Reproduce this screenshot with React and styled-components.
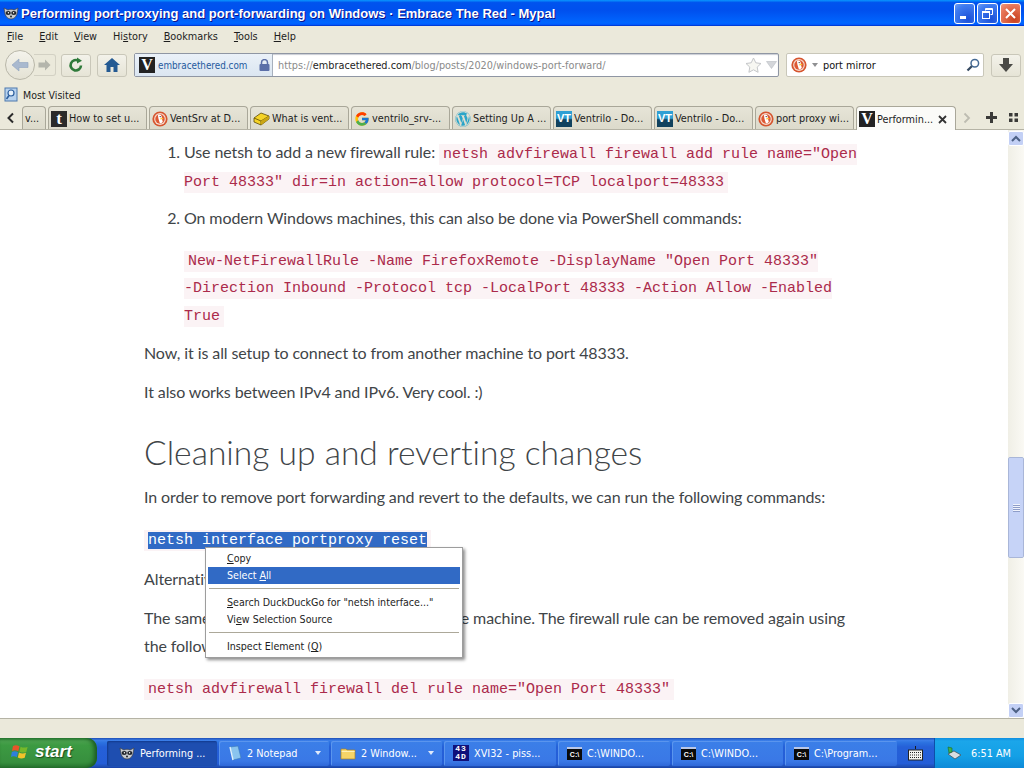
import React from 'react';
import styled, { createGlobalStyle, css } from 'styled-components';
import { FcGoogle } from 'react-icons/fc';
import { FaWordpress } from 'react-icons/fa';

const ui = `"DejaVu Sans Condensed", "DejaVu Sans", "Liberation Sans", sans-serif`;

const GlobalStyle = createGlobalStyle`
	html, body {
		margin: 0;
		padding: 0;
		background: #ffffff;
	}
`;

const Screen = styled.div`
	width: 1024px;
	height: 768px;
	display: flex;
	flex-direction: column;
	overflow: hidden;
	background: #ece9d8;
	font-family: ${ui};
	font-size: 10.8px;
	color: #1d1d1d;
`;

// Window chrome
const TitleBar = styled.div`
	height: 26px;
	flex: none;
	display: flex;
	align-items: center;
	padding: 0 3px 0 3px;
	gap: 2px;
	background: linear-gradient(180deg, #0997ff 0, #0053ee 10%, #0050ee 40%, #0066ff 88%, #005bff 94%, #003dd7 97%, #003dd7 100%);
`;

const TitleText = styled.div`
	flex: 1;
	color: #ffffff;
	font-family: "Liberation Sans", sans-serif;
	font-weight: 700;
	font-size: 13px;
	text-shadow: 1px 1px 0 #0f1089;
	white-space: nowrap;
`;

const WinButtons = styled.div`
	display: flex;
	gap: 2px;
`;

const WinButton = styled.div`
	width: 21px;
	height: 21px;
	box-sizing: border-box;
	border: 1px solid #ffffff;
	border-radius: 3px;
	display: flex;
	align-items: center;
	justify-content: center;
	background: ${p => (p.$close ? 'radial-gradient(circle at 70% 80%, #c9401e, #e8785a 70%, #ee9a80)' : 'radial-gradient(circle at 70% 80%, #1c50d8, #3f7cf0 70%, #6d9cf5)')};
`;

const MenuBar = styled.div`
	height: 20px;
	flex: none;
	display: flex;
	align-items: center;
	gap: 16px;
	padding: 0 7px;
	background: #ebe9db;
`;

const Underlined = styled.span`
	text-decoration: underline;
	text-underline-offset: 1px;
`;

const NavBar = styled.div`
	height: 38px;
	flex: none;
	display: flex;
	align-items: center;
	padding: 0 3px 0 5px;
	background: #ebe9db;
`;

const BackButton = styled.div`
	width: 30px;
	height: 30px;
	box-sizing: border-box;
	border-radius: 50%;
	border: 1px solid #b9b7a9;
	background: linear-gradient(#f4f3ec, #e4e2d4);
	display: flex;
	align-items: center;
	justify-content: center;
	position: relative;
	z-index: 1;
`;

const ForwardButton = styled.div`
	width: 22px;
	height: 22px;
	box-sizing: border-box;
	margin-left: -1px;
	border: 1px solid #d3d1c4;
	border-left: none;
	border-radius: 0 3px 3px 0;
	background: #ebe9db;
	display: flex;
	align-items: center;
	justify-content: center;
`;

const ToolButton = styled.div`
	width: 30px;
	height: 23px;
	flex: none;
	box-sizing: border-box;
	margin-left: ${p => p.$gap || 6}px;
	border: 1px solid #c9c7b9;
	border-radius: 3px;
	background: linear-gradient(#f3f2ea, #e6e4d6);
	display: flex;
	align-items: center;
	justify-content: center;
`;

const UrlBar = styled.div`
	width: 645px;
	height: 24px;
	box-sizing: border-box;
	margin-left: 7px;
	border: 1px solid #8f96a3;
	border-radius: 2px;
	background: #ffffff;
	display: flex;
	align-items: center;
	box-shadow: inset 0 1px 1px #c9cdd4;
`;

const Identity = styled.div`
	width: 138px;
	height: 100%;
	flex: none;
	box-sizing: border-box;
	display: flex;
	align-items: center;
	padding-left: 4px;
	gap: 3px;
	background: linear-gradient(#eaf1f8, #dbe6f1);
	border-right: 1px solid #a7b0bd;
	color: #1f5a9e;
	font-size: 9.8px;
`;

const LockIcon = styled.div`
	margin-left: 9px;
	display: flex;
`;

const UrlText = styled.div`
	flex: 1;
	padding-left: 5px;
	color: #8a8a8a;
	white-space: nowrap;
`;

const Host = styled.span`
	color: #1d1d1d;
`;

const UrlEnd = styled.div`
	display: flex;
	align-items: center;
	gap: 4px;
	padding-right: 1px;
`;

const SearchBar = styled.div`
	width: 198px;
	height: 24px;
	box-sizing: border-box;
	margin-left: 7px;
	border: 1px solid #c9c7b9;
	border-radius: 2px;
	background: #ffffff;
	display: flex;
	align-items: center;
	padding: 0 3px 0 4px;
`;

const SearchValue = styled.div`
	flex: 1;
	padding-left: 2px;
	color: #111111;
`;

const Bookmarks = styled.div`
	height: 21px;
	flex: none;
	display: flex;
	align-items: center;
	gap: 4px;
	padding: 0 4px;
	background: #ebe9db;
	font-size: 10.5px;
`;

const TabStrip = styled.div`
	height: 25px;
	flex: none;
	display: flex;
	align-items: flex-end;
	gap: 2px;
	background: #ebe9db;
	border-bottom: 1px solid #b5b3a5;
	box-sizing: border-box;
`;

const TabArrow = styled.div`
	width: 20px;
	height: 23px;
	flex: none;
	display: flex;
	align-items: center;
	justify-content: center;
`;

const Tab = styled.div`
	width: ${p => p.$w || 99}px;
	height: 23px;
	flex: none;
	box-sizing: border-box;
	display: flex;
	align-items: center;
	gap: 2px;
	padding: 1px 2px 0;
	border: 1px solid #a9a799;
	border-bottom: none;
	border-radius: 4px 4px 0 0;
	white-space: nowrap;
	overflow: hidden;
	${p =>
		p.$active
			? css`
					background: #fbfbf8;
					height: 24px;
					margin-bottom: -1px;
			  `
			: css`
					background: linear-gradient(#e6e4d7, #dcdacb);
			  `}
`;

const TabLabel = styled.span`
	flex: 1;
`;

const TabTools = styled.div`
	display: flex;
	align-items: center;
	height: 23px;
`;

const TabTool = styled.div`
	width: ${p => p.$w}px;
	display: flex;
	align-items: center;
	justify-content: center;
`;

// Favicons
const SquareIcon = styled.div`
	width: 16px;
	height: 16px;
	flex: none;
	display: flex;
	align-items: center;
	justify-content: center;
	overflow: hidden;
	color: #ffffff;
	background: ${p => p.$bg || '#1a1a1a'};
	font-family: ${p => p.$font || '"Liberation Serif", serif'};
	font-weight: 700;
	font-size: ${p => p.$size || 16}px;
	line-height: 1;
`;

const BrandWrap = styled.span`
	display: flex;
	flex: none;
	color: ${p => p.$color || 'inherit'};
`;

const VLogo = () => <SquareIcon $bg='#222222'>V</SquareIcon>;
const TumblrLogo = () => <SquareIcon $bg='#2a2a2a' $size={17}>t</SquareIcon>;
const VentriloLogo = () => (
	<SquareIcon $bg='linear-gradient(#2f9fd4 45%, #11425e 55%)' $font='"Liberation Sans", sans-serif' $size={11}>
		VT
	</SquareIcon>
);

const DuckLogo = () => (
	<svg width='16' height='16' viewBox='0 0 16 16' style={{ flex: 'none' }}>
		<circle cx='8' cy='8' r='7.6' fill='#d6552f' />
		<circle cx='8' cy='8' r='5.9' fill='#f4d9cc' />
		<circle cx='8' cy='8' r='4.7' fill='#de5833' />
		<path d='M6.2 3.6c2-.7 3.6.4 3.6 2.6 0 1 .5 3 1 4.6-.7 1.2-2 1.7-2.8 1.7-.6-1.8-1.6-4.6-1.8-6.3-.1-1.1-.3-1.9 0-2.6z' fill='#fff' />
		<path d='M8 7.6l3-.8.3 1-2.8.8z' fill='#fbc02d' />
		<circle cx='8.2' cy='5.6' r='.7' fill='#263238' />
	</svg>
);

const BrickLogo = () => (
	<svg width='17' height='16' viewBox='0 0 17 16' style={{ flex: 'none' }}>
		<path d='M1 7l7-5 8 3v3l-8 6-7-3z' fill='#f5d327' stroke='#5c4a06' strokeWidth='.8' />
		<path d='M1 7l7 3 8-5M8 10v4' fill='none' stroke='#5c4a06' strokeWidth='.8' />
		<path d='M8 10l8-5v3l-8 6z' fill='#c9a513' />
	</svg>
);

const MypalLogo = ({ size = 16 }) => (
	<svg width={size} height={size} viewBox='0 0 16 16' style={{ flex: 'none' }}>
		<path d='M1 3l4 2c2-1 4-1 6 0l4-2-1 6c-1 3-3 5-6 5s-5-2-6-5z' fill='#c9ccd0' stroke='#3a3f48' strokeWidth='.7' />
		<ellipse cx='5.2' cy='8' rx='2.6' ry='1.9' fill='#20242a' />
		<ellipse cx='10.8' cy='8' rx='2.6' ry='1.9' fill='#20242a' />
		<circle cx='5.4' cy='7.8' r='.7' fill='#fff' />
		<circle cx='10.6' cy='7.8' r='.7' fill='#fff' />
		<circle cx='8' cy='11.6' r='1' fill='#20242a' />
	</svg>
);

const ConsoleIcon = styled.div`
	width: 15px;
	height: 11px;
	flex: none;
	background: #0a0a0a;
	border-top: 2px solid #b9c7e8;
	color: #ffffff;
	font-family: "Liberation Sans", sans-serif;
	font-size: 7px;
	font-weight: 700;
	line-height: 11px;
	text-align: center;
`;

const HexIcon = styled.div`
	width: 16px;
	height: 16px;
	flex: none;
	background: #10107a;
	color: #ffffff;
	font-family: "Liberation Mono", monospace;
	font-size: 8px;
	font-weight: 700;
	line-height: 8px;
	text-align: center;
	letter-spacing: 1px;
`;

// Page content
const Content = styled.div`
	flex: 1;
	min-height: 0;
	display: flex;
	background: #ffffff;
`;

const Page = styled.div`
	flex: 1;
	position: relative;
	overflow: hidden;
`;

const Article = styled.article`
	width: 716px;
	margin-left: 144px;
	padding-top: 8px;
	font-family: "Lato", sans-serif;
	font-size: 16px;
	letter-spacing: -0.1px;
	line-height: 27.5px;
	color: #3f4548;
	font-variant-ligatures: none;
`;

const Steps = styled.ol`
	margin: 0 0 11.5px;
	padding-left: 40px;
`;

const Step = styled.li`
	margin-bottom: 10.5px;

	&:last-child {
		margin-bottom: 0;
	}
`;

const Paragraph = styled.p`
	margin: 0 0 12px;
`;

const CodeLine = styled.p`
	margin: ${p => (p.$tight ? '13.5px 0 0' : '14px 0 13px')};
`;

const Code = styled.code`
	font-family: "Liberation Mono", monospace;
	font-size: 15px;
	line-height: 1;
	letter-spacing: 0;
	padding: 2px 4px;
	background: #fbf3f5;
	color: #ab2a4b;
`;

const Selected = styled.span`
	background: #316ac5;
	color: #ffffff;
`;

const Heading = styled.h2`
	margin: 24px 0 9px;
	font-size: 33.6px;
	line-height: 44px;
	letter-spacing: 0;
	font-weight: 300;
	color: #3f4548;
`;

const ContextMenu = styled.div`
	position: absolute;
	left: 205px;
	top: 417px;
	width: 258px;
	box-sizing: border-box;
	padding: 2px;
	background: #ffffff;
	border: 1px solid #9d9d9d;
	box-shadow: 2px 2px 3px rgba(0, 0, 0, 0.45);
	font-size: 10.6px;
	color: #1d1d1d;
`;

const MenuItem = styled.div`
	height: 17px;
	line-height: 16px;
	padding-left: 19px;
	white-space: nowrap;
	${p =>
		p.$hot &&
		css`
			background: #316ac5;
			color: #ffffff;
		`}
`;

const MenuRule = styled.div`
	height: 1px;
	margin: 4px 1px 5px;
	background: #aca899;
`;

// Scrollbar
const Scrollbar = styled.div`
	width: 16px;
	flex: none;
	display: flex;
	flex-direction: column;
	background: linear-gradient(90deg, #f0efe6, #faf9f4);
`;

const ScrollButton = styled.div`
	height: 15px;
	margin-top: ${p => p.$top || 0}px;
	box-sizing: border-box;
	border: 1px solid #ffffff;
	border-radius: 2px;
	background: #c3d0f5;
	display: flex;
	align-items: center;
	justify-content: center;
`;

const Track = styled.div`
	flex: 1;
`;

const Thumb = styled.div`
	height: 101px;
	margin-top: 311px;
	box-sizing: border-box;
	border: 1px solid #eef1fa;
	outline: 1px solid #a9b6d8;
	outline-offset: -1px;
	border-radius: 2px;
	background: #c6d3f7;
	display: flex;
	align-items: center;
	justify-content: center;
`;

const Grip = styled.div`
	width: 7px;
	height: 8px;
	background: repeating-linear-gradient(#f0f3fc 0 1px, #8e9dc9 1px 2px);
`;

const AddonBar = styled.div`
	height: 20px;
	flex: none;
	box-sizing: border-box;
	background: #ebe9db;
	border-top: 1px solid #b5b3a5;
`;

// Taskbar
const Taskbar = styled.div`
	height: 30px;
	flex: none;
	display: flex;
	align-items: stretch;
	background: linear-gradient(#1f4fb5 0, #3a7de8 8%, #2b71e0 16%, #2560d8 30%, #245dd7 85%, #1f4fb5 95%, #1941a5 100%);
	color: #ffffff;
`;

const StartButton = styled.div`
	width: 97px;
	flex: none;
	box-sizing: border-box;
	display: flex;
	align-items: center;
	gap: 5px;
	padding: 0 0 2px 11px;
	border-radius: 0 10px 10px 0;
	background: linear-gradient(#2f8a3a 0, #4aa14e 10%, #3c9a42 25%, #378f3e 80%, #2a7a32 100%);
	box-shadow: inset -3px 0 4px #1b5a22;
	font-family: "Liberation Sans", sans-serif;
	font-weight: 700;
	font-style: italic;
	font-size: 17px;
	text-shadow: 1px 1px 1px #1a4d1f;
`;

const TaskItems = styled.div`
	flex: 1;
	display: flex;
	align-items: center;
	gap: 2px;
	padding-left: 10px;
`;

const TaskItem = styled.div`
	width: ${p => p.$w || 110}px;
	height: 25px;
	flex: none;
	box-sizing: border-box;
	display: flex;
	align-items: center;
	gap: 5px;
	padding: 0 6px 0 ${p => (p.$active ? 12 : 9)}px;
	border-radius: 2px;
	white-space: nowrap;
	overflow: hidden;
	background: ${p => (p.$active ? '#1e4eb0' : 'linear-gradient(#3b7fe8, #3a78e6 80%, #2f68d8)')};
	box-shadow: ${p => (p.$active ? 'inset 1px 1px 2px #123a8c' : 'inset 1px 1px 0 #5a95ee')};
`;

const TaskLabel = styled.span`
	flex: 1;
`;

const TaskCaret = styled.span`
	width: 0;
	height: 0;
	margin-right: 2px;
	border: 3px solid transparent;
	border-top: 4px solid #dfe9fb;
	border-bottom: none;
`;

const KeyboardWrap = styled.div`
	width: 37px;
	flex: none;
	display: flex;
	align-items: center;
	justify-content: center;
`;

const Tray = styled.div`
	width: 92px;
	flex: none;
	box-sizing: border-box;
	display: flex;
	align-items: center;
	gap: 8px;
	padding-left: 11px;
	background: linear-gradient(#0f8de0 0, #1ba6ea 10%, #14a0e6 60%, #0e8ad8 100%);
	border-left: 1px solid #0e4fa8;
`;

const tabs = [
	{ label: 'How to set u...', icon: <TumblrLogo /> },
	{ label: 'VentSrv at D...', icon: <DuckLogo /> },
	{ label: 'What is vent...', icon: <BrickLogo /> },
	{ label: 'ventrilo_srv-...', icon: <BrandWrap><FcGoogle size={16} /></BrandWrap> },
	{ label: 'Setting Up A ...', icon: <BrandWrap $color='#2aa5c9'><FaWordpress size={16} /></BrandWrap> },
	{ label: 'Ventrilo - Do...', icon: <VentriloLogo /> },
	{ label: 'Ventrilo - Do...', icon: <VentriloLogo /> },
	{ label: 'port proxy wi...', icon: <DuckLogo /> },
];

const tasks = [
	{ label: '2 Notepad', caret: true, icon: (
		<svg width='14' height='16' viewBox='0 0 14 16'>
			<path d='M2 2l8-1 3 12-8 2z' fill='#8ac4ee' stroke='#3a78b8' strokeWidth='.6' />
			<path d='M2 2l3 13' stroke='#dff0fb' strokeWidth='1.4' />
		</svg>
	) },
	{ label: '2 Window...', caret: true, w: 111, icon: (
		<svg width='16' height='14' viewBox='0 0 16 14'>
			<path d='M1 3h5l1 1h8v9H1z' fill='#f6d467' stroke='#a8832a' strokeWidth='.7' />
			<path d='M1.6 5.4h13' stroke='#fff3c0' />
		</svg>
	) },
	{ label: 'XVI32 - piss...', w: 112, icon: <HexIcon>43<br />4D</HexIcon> },
	{ label: 'C:\\WINDO...', w: 112, icon: <ConsoleIcon>C:\</ConsoleIcon> },
	{ label: 'C:\\WINDO...', w: 111, icon: <ConsoleIcon>C:\</ConsoleIcon> },
	{ label: 'C:\\Program...', w: 112, icon: <ConsoleIcon>C:\</ConsoleIcon> },
];

const App = () => {
	return (
		<Screen>
			<GlobalStyle />

			<TitleBar>
				<MypalLogo />
				<TitleText>Performing port-proxying and port-forwarding on Windows · Embrace The Red - Mypal</TitleText>
				<WinButtons>
					<WinButton>
						<svg width='13' height='13' viewBox='0 0 13 13'>
							<rect x='2' y='9' width='6' height='3' fill='#fff' />
						</svg>
					</WinButton>
					<WinButton>
						<svg width='13' height='13' viewBox='0 0 13 13' fill='none' stroke='#fff'>
							<path d='M4.5 3.5v-2h7v6h-2' />
							<rect x='1.5' y='4.5' width='7' height='7' />
							<path d='M1.5 5.5h7M4.5 2.5h7' />
						</svg>
					</WinButton>
					<WinButton $close>
						<svg width='13' height='13' viewBox='0 0 13 13' stroke='#fff' strokeWidth='2'>
							<path d='M2 2l9 9M11 2l-9 9' />
						</svg>
					</WinButton>
				</WinButtons>
			</TitleBar>

			<MenuBar>
				<span><Underlined>F</Underlined>ile</span>
				<span><Underlined>E</Underlined>dit</span>
				<span><Underlined>V</Underlined>iew</span>
				<span>Hi<Underlined>s</Underlined>tory</span>
				<span><Underlined>B</Underlined>ookmarks</span>
				<span><Underlined>T</Underlined>ools</span>
				<span><Underlined>H</Underlined>elp</span>
			</MenuBar>

			<NavBar>
				<BackButton>
					<svg width='18' height='14' viewBox='0 0 18 14'>
						<path d='M8 1L1 7l7 6V9.5h9v-5H8z' fill='#a9b9cf' stroke='#8fa2bd' strokeWidth='.6' />
					</svg>
				</BackButton>
				<ForwardButton>
					<svg width='13' height='12' viewBox='0 0 13 12'>
						<path d='M7 .5L12.5 6 7 11.5V8.5H.5v-5H7z' fill='#b4b5ac' />
					</svg>
				</ForwardButton>
				<ToolButton $gap={5}>
					<svg width='16' height='16' viewBox='0 0 16 16' fill='none'>
						<path d='M13 8.5A5.2 5.2 0 1 1 10.6 3.9' stroke='#2f7a3a' strokeWidth='2.6' />
						<path d='M9 .5l5 3.2-5 2.8z' fill='#2f7a3a' />
					</svg>
				</ToolButton>
				<ToolButton>
					<svg width='16' height='14' viewBox='0 0 16 14'>
						<path d='M8 0L0 7h2.5v7H6.5V9h3v5h4V7H16z' fill='#245a92' />
					</svg>
				</ToolButton>
				<UrlBar>
					<Identity>
						<VLogo />
						embracethered.com
						<LockIcon>
							<svg width='11' height='12' viewBox='0 0 11 12'>
								<rect x='.5' y='5' width='10' height='7' rx='1' fill='#5b6fa8' />
								<path d='M2.5 5.5V3.6a3 3 0 0 1 6 0v1.9' fill='none' stroke='#5b6fa8' strokeWidth='1.5' />
							</svg>
						</LockIcon>
					</Identity>
					<UrlText>
						https://<Host>embracethered.com</Host>/blog/posts/2020/windows-port-forward/
					</UrlText>
					<UrlEnd>
						<svg width='17' height='16' viewBox='0 0 17 16'>
							<path d='M8.5 1l2.3 4.8 5.2.7-3.8 3.6.9 5.2-4.6-2.5-4.6 2.5.9-5.2L1 6.5l5.2-.7z' fill='#f7f7f2' stroke='#c4c6c9' />
						</svg>
						<svg width='11' height='8' viewBox='0 0 11 8'>
							<path d='M.5.5h10L5.5 7.5z' fill='#d4d6da' stroke='#b8bcc2' strokeWidth='.6' />
						</svg>
					</UrlEnd>
				</UrlBar>
				<SearchBar>
					<DuckLogo />
					<svg width='13' height='8' viewBox='0 0 13 8' style={{ marginLeft: 1 }}>
						<path d='M4 2h6L7 6z' fill='#8f9092' />
					</svg>
					<SearchValue>port mirror</SearchValue>
					<svg width='14' height='14' viewBox='0 0 14 14' fill='none'>
						<circle cx='8.8' cy='5.2' r='3.8' stroke='#456a94' strokeWidth='1.5' />
						<path d='M5.8 8.2L1.5 12.5' stroke='#33475f' strokeWidth='2.2' />
					</svg>
				</SearchBar>
				<ToolButton $gap={7}>
					<svg width='16' height='15' viewBox='0 0 16 15'>
						<path d='M5 0h6v6h4l-7 8-7-8h4z' fill='#4a4a46' />
					</svg>
				</ToolButton>
			</NavBar>

			<Bookmarks>
				<svg width='15' height='15' viewBox='0 0 15 15'>
					<rect x='1' y='1' width='12' height='13' fill='#b7d2ee' stroke='#4d79ad' />
					<circle cx='7' cy='6' r='3' fill='#e8f2fb' stroke='#2c5f9e' strokeWidth='1.2' />
					<path d='M5 8.5L2.5 12' stroke='#2c5f9e' strokeWidth='1.6' />
				</svg>
				Most Visited
			</Bookmarks>

			<TabStrip>
				<TabArrow>
					<svg width='9' height='12' viewBox='0 0 9 12' fill='none'>
						<path d='M7 1.5L2.5 6 7 10.5' stroke='#2b2b2b' strokeWidth='2' />
					</svg>
				</TabArrow>
				<Tab $w={24}>v...</Tab>
				{tabs.map((t, i) => (
					<Tab key={i}>
						{t.icon}
						<TabLabel>{t.label}</TabLabel>
					</Tab>
				))}
				<Tab $active $w={100}>
					<VLogo />
					<TabLabel>Performin...</TabLabel>
					<svg width='9' height='9' viewBox='0 0 9 9' stroke='#333' strokeWidth='1.8' style={{ marginRight: 6 }}>
						<path d='M1 1l7 7M8 1L1 8' />
					</svg>
				</Tab>
				<TabTools>
					<TabTool $w={18}>
						<svg width='8' height='12' viewBox='0 0 8 12' fill='none'>
							<path d='M1.5 1.5L6 6l-4.5 4.5' stroke='#bdbcb1' strokeWidth='1.8' />
						</svg>
					</TabTool>
					<TabTool $w={30}>
						<svg width='11' height='11' viewBox='0 0 11 11'>
							<path d='M4 0h3v4h4v3H7v4H4V7H0V4h4z' fill='#3a3a38' />
						</svg>
					</TabTool>
					<TabTool $w={14}>
						<svg width='9' height='9' viewBox='0 0 9 9' fill='#3a3a38'>
							<rect width='3.5' height='3.5' />
							<rect x='5.5' width='3.5' height='3.5' />
							<rect y='5.5' width='3.5' height='3.5' />
							<rect x='5.5' y='5.5' width='3.5' height='3.5' />
						</svg>
					</TabTool>
				</TabTools>
			</TabStrip>

			<Content>
				<Page>
					<Article>
						<Steps>
							<Step>
								Use netsh to add a new firewall rule: <Code>netsh advfirewall firewall add rule name="Open Port 48333" dir=in action=allow protocol=TCP localport=48333</Code>
							</Step>
							<Step>
								On modern Windows machines, this can also be done via PowerShell commands:
								<CodeLine $tight>
									<Code>New-NetFirewallRule -Name FirefoxRemote -DisplayName "Open Port 48333"<br />-Direction Inbound -Protocol tcp -LocalPort 48333 -Action Allow -Enabled True</Code>
								</CodeLine>
							</Step>
						</Steps>
						<Paragraph>Now, it is all setup to connect to from another machine to port 48333.</Paragraph>
						<Paragraph>It also works between IPv4 and IPv6. Very cool. :)</Paragraph>
						<Heading>Cleaning up and reverting changes</Heading>
						<Paragraph>In order to remove port forwarding and revert to the defaults, we can run the following commands:</Paragraph>
						<CodeLine>
							<Code><Selected>netsh interface portproxy reset</Selected></Code>
						</CodeLine>
						<Paragraph>Alternatively, a single rule can go.</Paragraph>
						<Paragraph>The same applies to the firewall settings on the machine. The firewall rule can be removed again using the following command:</Paragraph>
						<CodeLine>
							<Code>netsh advfirewall firewall del rule name="Open Port 48333"</Code>
						</CodeLine>
					</Article>

					<ContextMenu>
						<MenuItem><Underlined>C</Underlined>opy</MenuItem>
						<MenuItem $hot>Select <Underlined>A</Underlined>ll</MenuItem>
						<MenuRule />
						<MenuItem><Underlined>S</Underlined>earch DuckDuckGo for "netsh interface..."</MenuItem>
						<MenuItem>Vi<Underlined>e</Underlined>w Selection Source</MenuItem>
						<MenuRule />
						<MenuItem>Inspect Element (<Underlined>Q</Underlined>)</MenuItem>
					</ContextMenu>
				</Page>

				<Scrollbar>
					<ScrollButton $top={1}>
						<svg width='10' height='7' viewBox='0 0 10 7' fill='none'>
							<path d='M1 6l4-4 4 4' stroke='#4d6185' strokeWidth='2' />
						</svg>
					</ScrollButton>
					<Track>
						<Thumb>
							<Grip />
						</Thumb>
					</Track>
					<ScrollButton>
						<svg width='10' height='7' viewBox='0 0 10 7' fill='none'>
							<path d='M1 1l4 4 4-4' stroke='#4d6185' strokeWidth='2' />
						</svg>
					</ScrollButton>
				</Scrollbar>
			</Content>

			<AddonBar />

			<Taskbar>
				<StartButton>
					<svg width='19' height='18' viewBox='0 0 19 18'>
						<path d='M2 3c2-1 4-1 6.5.3L7.3 8.2C5 7 3 7 1 8z' fill='#e8542a' />
						<path d='M9.6 3.7c2 1 4 1.2 7 .2l-1.3 5c-2.4 1-4.6.8-6.9-.2z' fill='#76b82a' />
						<path d='M.8 9c2-1 4-1 6.2.3l-1.2 5C3.6 13 1.8 13 0 14z' fill='#2f7fdc' />
						<path d='M8 9.6c2.2 1 4.4 1.2 7 .2l-1.3 5c-2.6 1-4.6.8-6.9-.3z' fill='#f4c32a' />
					</svg>
					start
				</StartButton>
				<TaskItems>
					<TaskItem $active>
						<MypalLogo />
						<TaskLabel>Performing ...</TaskLabel>
					</TaskItem>
					{tasks.map((t, i) => (
						<TaskItem key={i} $w={t.w}>
							{t.icon}
							<TaskLabel>{t.label}</TaskLabel>
							{t.caret && <TaskCaret />}
						</TaskItem>
					))}
				</TaskItems>
				<KeyboardWrap>
					<svg width='15' height='15' viewBox='0 0 15 15'>
						<path d='M7.5 0v3' stroke='#1a1a1a' />
						<rect x='.5' y='4' width='14' height='10' fill='#f4f4f0' stroke='#222' />
						<path d='M2 6.5h11M2 9h11M2 11.5h11' stroke='#222' strokeDasharray='1 1' />
					</svg>
				</KeyboardWrap>
				<Tray>
					<svg width='17' height='17' viewBox='0 0 17 17'>
						<path d='M2 9l6-3 7 4-6 4z' fill='#d8dde0' stroke='#3f4a4f' strokeWidth='.7' />
						<path d='M2 2l4 1v4L3 8z' fill='#3fb24a' stroke='#1d6a27' strokeWidth='.6' />
					</svg>
					6:51 AM
				</Tray>
			</Taskbar>
		</Screen>
	);
};

export default App;
